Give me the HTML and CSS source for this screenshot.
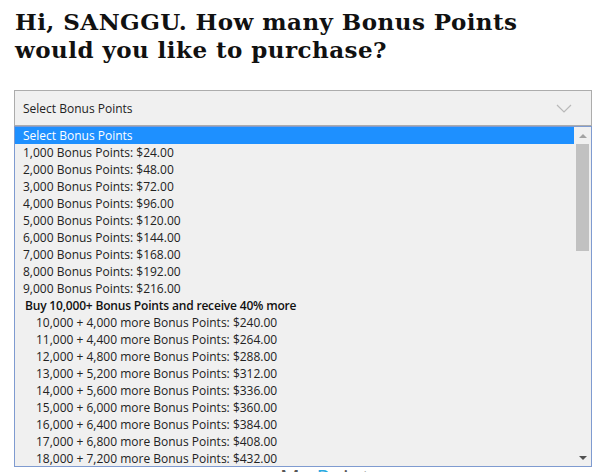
FILE: index.html
```html
<!DOCTYPE html>
<html>
<head>
<meta charset="utf-8">
<title>Purchase Bonus Points</title>
<link rel="stylesheet" href="styles.css">
</head>
<body>
<div class="page">
  <h1 class="title">Hi, SANGGU. How many Bonus Points<br>would you like to purchase?</h1>
  <div class="field">
    <div class="select">
      <span class="select-label">Select Bonus Points</span>
      <svg class="chevron" width="16" height="9" viewBox="0 0 16 9"><polyline points="1,1 8,8 15,1" fill="none" stroke="#b9b9b9" stroke-width="1.2"/></svg>
    </div>
    <div class="dropdown">
      <ul class="options">
        <li class="opt selected">Select Bonus Points</li>
        <li class="opt">1,000 Bonus Points: $24.00</li>
        <li class="opt">2,000 Bonus Points: $48.00</li>
        <li class="opt">3,000 Bonus Points: $72.00</li>
        <li class="opt">4,000 Bonus Points: $96.00</li>
        <li class="opt">5,000 Bonus Points: $120.00</li>
        <li class="opt">6,000 Bonus Points: $144.00</li>
        <li class="opt">7,000 Bonus Points: $168.00</li>
        <li class="opt">8,000 Bonus Points: $192.00</li>
        <li class="opt">9,000 Bonus Points: $216.00</li>
        <li class="group">Buy 10,000+ Bonus Points and receive 40% more</li>
        <li class="opt sub">10,000 + 4,000 more Bonus Points: $240.00</li>
        <li class="opt sub">11,000 + 4,400 more Bonus Points: $264.00</li>
        <li class="opt sub">12,000 + 4,800 more Bonus Points: $288.00</li>
        <li class="opt sub">13,000 + 5,200 more Bonus Points: $312.00</li>
        <li class="opt sub">14,000 + 5,600 more Bonus Points: $336.00</li>
        <li class="opt sub">15,000 + 6,000 more Bonus Points: $360.00</li>
        <li class="opt sub">16,000 + 6,400 more Bonus Points: $384.00</li>
        <li class="opt sub">17,000 + 6,800 more Bonus Points: $408.00</li>
        <li class="opt sub">18,000 + 7,200 more Bonus Points: $432.00</li>
        <li class="opt sub">19,000 + 7,600 more Bonus Points: $456.00</li>
      </ul>
      <div class="scrollbar">
        <span class="btn up"><span class="tri-up"></span></span>
        <span class="thumb"></span>
        <span class="btn down"><span class="tri-down"></span></span>
      </div>
    </div>
  </div>
  <div class="brand"><span class="dk">My</span> <span class="bl">Po</span><span class="dk">ints</span></div>
</div>
</body>
</html>
```
FILE: styles.css
```css
html, body {
  margin: 0;
  padding: 0;
  background: #ffffff;
}

.page {
  padding: 0 10px 0 14px;
}

.title {
  margin: 8px 0 0 1px;
  font-family: "DejaVu Serif", serif;
  font-weight: bold;
  font-size: 23px;
  letter-spacing: 0.45px;
  line-height: 28px;
  color: #111;
}

.field {
  position: relative;
  margin-top: 26px;
  width: 578px;
}

.select {
  box-sizing: border-box;
  height: 36px;
  border: 1px solid #acacac;
  background: #f0f0f0;
  display: flex;
  align-items: center;
  justify-content: space-between;
  padding: 0 19px 0 8px;
  font-family: "Open Sans", sans-serif;
  font-size: 12px;
  color: #222;
}

.chevron {
  display: block;
}

.dropdown {
  position: absolute;
  left: 0;
  top: 36px;
  width: 578px;
  height: 341px;
  box-sizing: border-box;
  border: 1px solid #7f9bd0;
  background: #f0f0f0;
  display: flex;
  overflow: hidden;
}

.options {
  list-style: none;
  margin: 0;
  padding: 0;
  flex: 1;
  font-family: "Open Sans", sans-serif;
  font-size: 12px;
  line-height: 17px;
  color: #222;
}

.opt {
  padding-left: 8px;
  white-space: nowrap;
}

.opt.selected {
  background: #1e90ff;
  color: #fff;
}

.group {
  padding-left: 10px;
  font-weight: 600;
  letter-spacing: -0.18px;
  color: #111;
}

.opt.sub {
  padding-left: 21px;
}

.scrollbar {
  width: 17px;
  display: flex;
  flex-direction: column;
  align-items: center;
  background: #f0f0f0;
}

.btn {
  height: 17px;
  width: 17px;
  display: flex;
  align-items: center;
  justify-content: center;
}

.btn.down {
  margin-top: auto;
  height: 16px;
}

.tri-up {
  width: 0;
  height: 0;
  border-left: 4px solid transparent;
  border-right: 4px solid transparent;
  border-bottom: 4px solid #a3a3a3;
}

.tri-down {
  width: 0;
  height: 0;
  border-left: 4px solid transparent;
  border-right: 4px solid transparent;
  border-top: 4px solid #505050;
}

.thumb {
  width: 13px;
  height: 107px;
  background: #c1c1c1;
}

.brand {
  margin-top: 336px;
  padding-left: 266px;
  font-family: "Open Sans", sans-serif;
  font-size: 22px;
  line-height: 30px;
  height: 30px;
}

.brand .dk {
  color: #555;
}

.brand .bl {
  color: #29a9e1;
}
```
